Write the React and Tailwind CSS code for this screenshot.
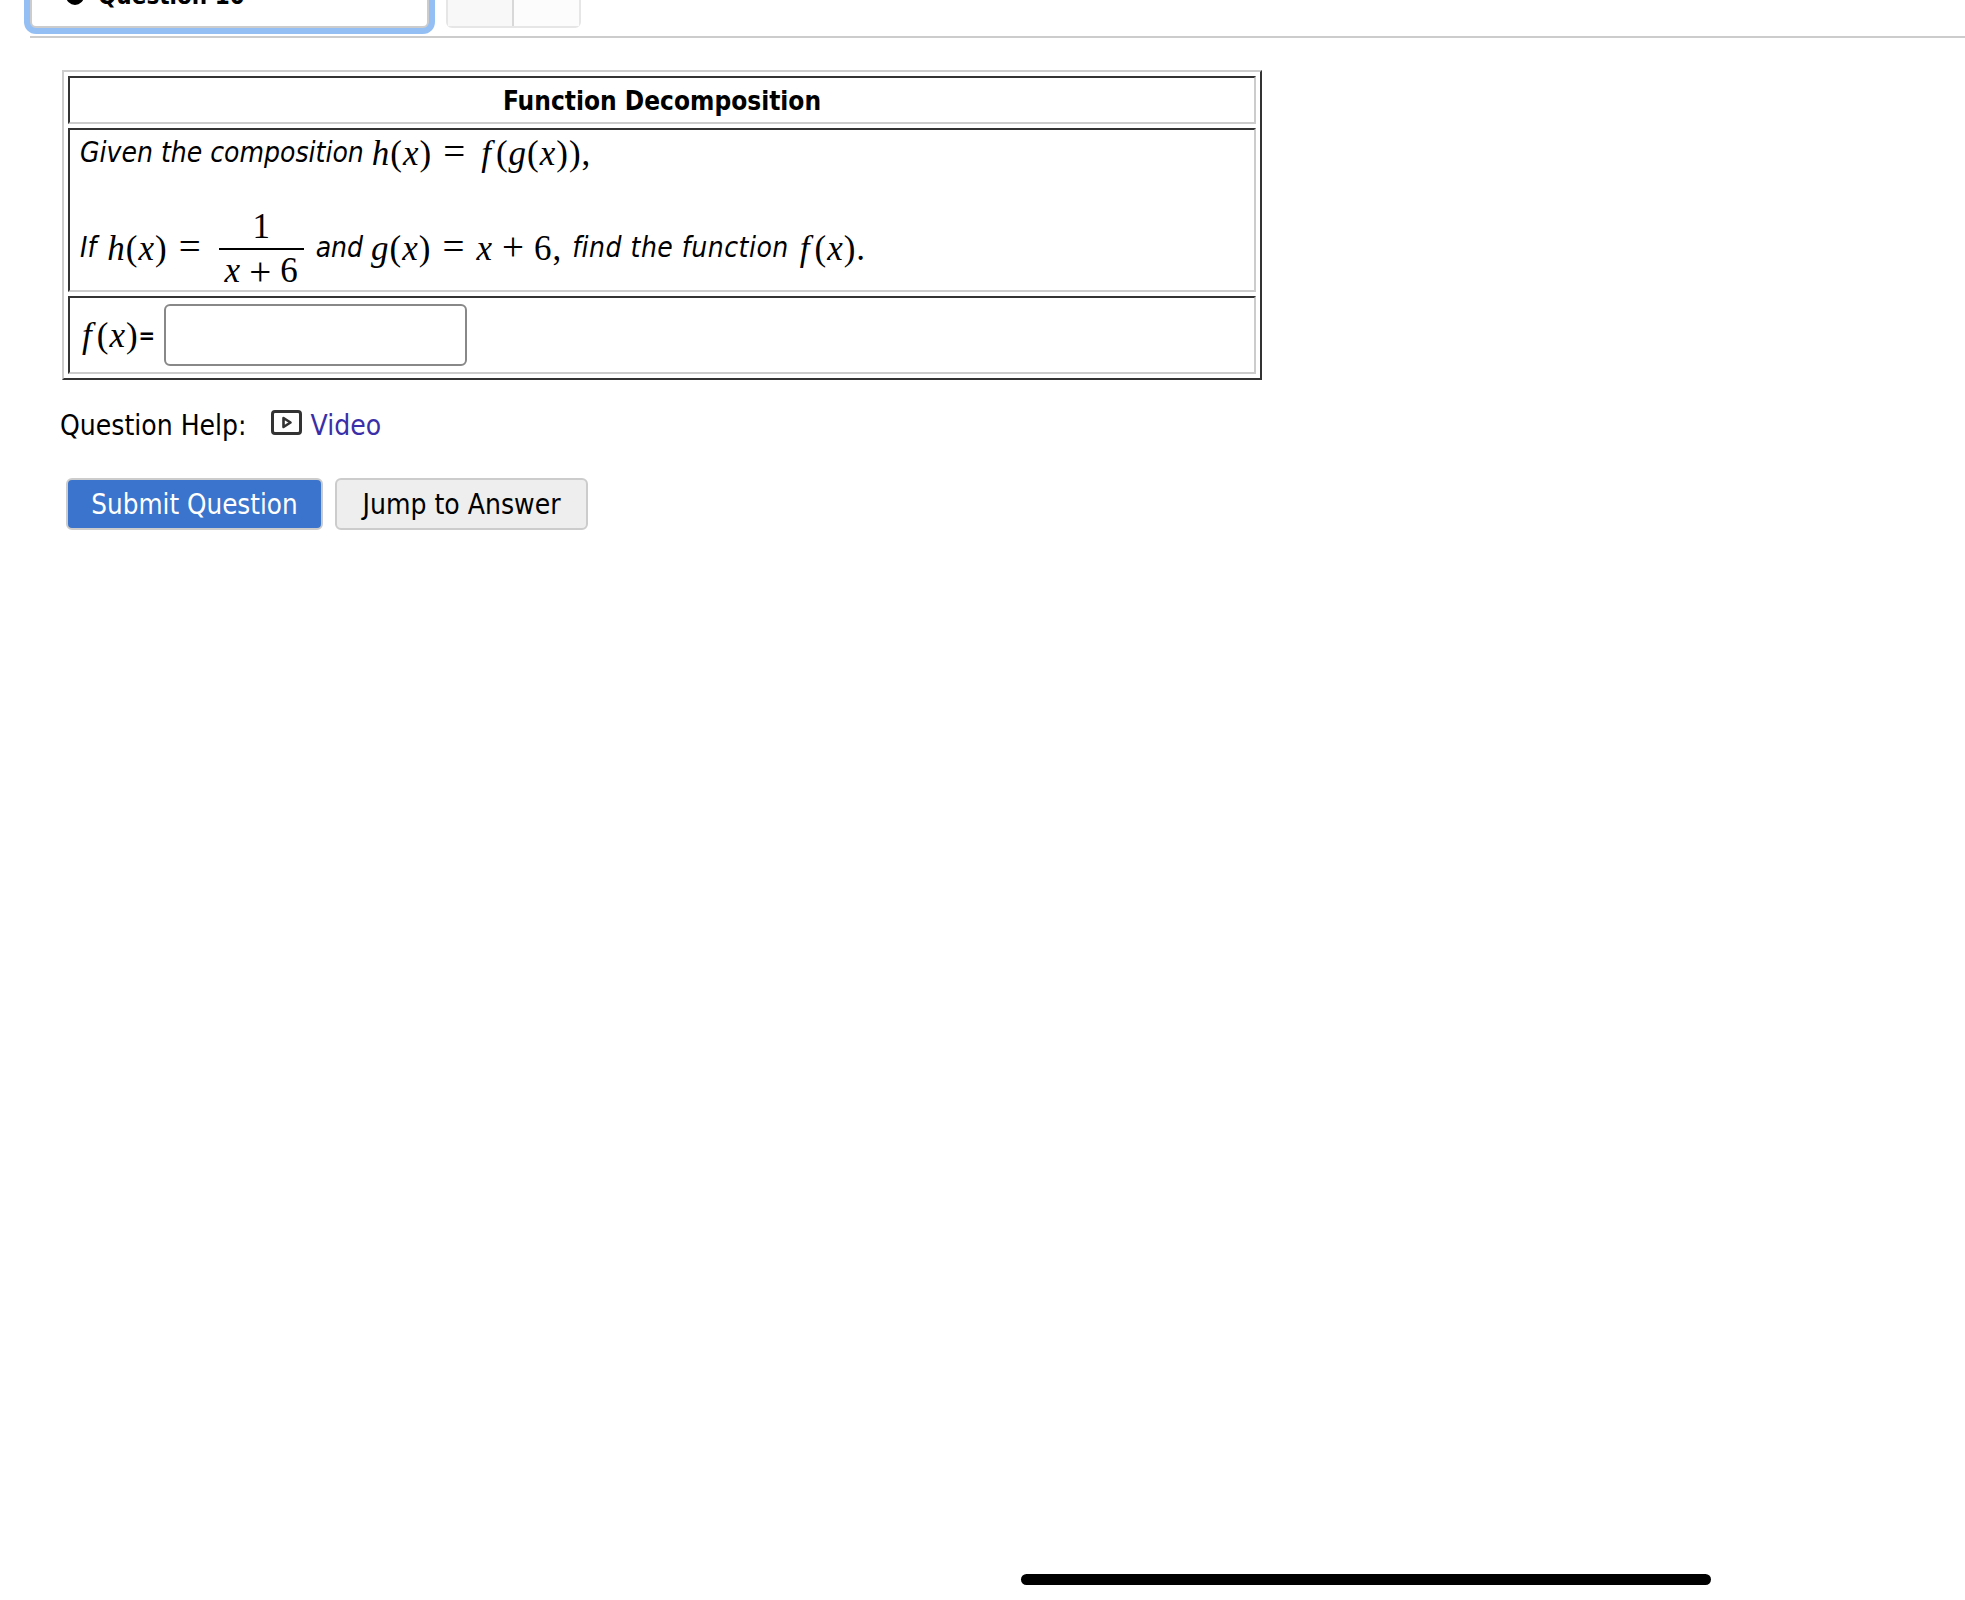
function Mi({ children, className = '' }) {
  return <span className={`font-['Liberation_Serif',serif] italic ${className}`}>{children}</span>
}

function Mn({ children }) {
  return <span className="font-['Liberation_Serif',serif] not-italic">{children}</span>
}

function Eq() {
  return <span className="font-['Liberation_Serif',serif] not-italic text-[39px] leading-none mx-[11px]">=</span>
}

function Plus() {
  return <span className="font-['Liberation_Serif',serif] not-italic text-[39px] leading-none mx-[9px]">+</span>
}

function Math({ children, className = '' }) {
  return <span className={`text-[35px] leading-[40px] not-italic tracking-[1px] ${className}`}>{children}</span>
}

export default function App() {
  return (
    <div className="relative h-[1600px] w-[1965px] overflow-hidden bg-white text-[28px] text-black font-['DejaVu_Sans_Condensed','DejaVu_Sans',sans-serif]">
      <div className="ml-[30px] flex h-[38px] items-end gap-[17px] border-b-2 border-[#cccccc] pb-[8px]">
        <div className="flex h-[64px] w-[399px] items-center gap-[14px] rounded-[6px] border-2 border-[#cccccc] bg-white pl-[34px] ring-[6px] ring-[#94bff5]">
          <span className="h-[18px] w-[18px] rounded-full border-[5px] border-black" />
          <span className="text-[24px] font-semibold">Question 10</span>
        </div>
        <div className="flex h-[40px] w-[135px] rounded-[6px] border-2 border-[#e6e6e6]">
          <div className="w-[66px] border-r-2 border-[#d8d8d8] bg-[#f8f8f8]" />
          <div className="flex-1 bg-[#fcfcfc]" />
        </div>
      </div>

      <div className="ml-[62px] mt-[32px] w-[1200px]">
        <table className="w-full border-separate border-spacing-1 border-2 border-[#cccccc] border-r-[#333333] border-b-[#333333]">
          <tbody>
            <tr>
              <th className="h-[48px] border-2 border-[#333333] border-r-[#cccccc] border-b-[#cccccc] pt-[2px] text-center text-[26px] font-bold">
                Function Decomposition
              </th>
            </tr>
            <tr>
              <td className="h-[164px] border-2 border-[#333333] border-r-[#cccccc] border-b-[#cccccc] pl-[10px] align-top italic">
                <div className="mt-[3px] flex h-[40px] items-center whitespace-pre">
                  Given the composition <Math><Mi>h</Mi><Mn>(</Mn><Mi>x</Mi><Mn>)</Mn><Eq /><Mi className="ml-[4px] pr-[4px]">f</Mi><Mn>(</Mn><Mi>g</Mi><Mn>(</Mn><Mi>x</Mi><Mn>)),</Mn></Math>
                </div>
                <div className="mt-[33px] flex h-[84px] items-center whitespace-pre">
                  If <Math><Mi className="ml-[3px]">h</Mi><Mn>(</Mn><Mi>x</Mi><Mn>)</Mn><Eq /></Math>
                  <span className="ml-[6px] mr-[12px] flex w-[85px] flex-col items-center text-[35px] not-italic leading-[36px]">
                    <span className="w-full border-b-2 border-black pb-[3px] pt-[2px] text-center"><Mn>1</Mn></span>
                    <span className="flex items-center pt-[2px] text-center"><Mi>x</Mi><Plus /><Mn>6</Mn></span>
                  </span>
                  and <Math><Mi>g</Mi><Mn>(</Mn><Mi>x</Mi><Mn>)</Mn><Eq /><Mi>x</Mi><Plus /><Mn>6,</Mn></Math>
                  <span className="ml-[10px] tracking-[0.5px]">find the function</span>
                  <Math className="ml-[11px]"><Mi className="pr-[4px]">f</Mi><Mn>(</Mn><Mi>x</Mi><Mn>).</Mn></Math>
                </div>
              </td>
            </tr>
            <tr>
              <td className="h-[78px] border-2 border-[#333333] border-r-[#cccccc] border-b-[#cccccc] pl-[12px]">
                <div className="flex items-center">
                  <Math><Mi className="pr-[4px]">f</Mi><Mn>(</Mn><Mi>x</Mi><Mn>)</Mn></Math>
                  <span className="text-[22px] font-bold">=</span>
                  <input className="ml-[9px] h-[62px] w-[303px] rounded-[6px] border-2 border-[#888888] bg-white" />
                </div>
              </td>
            </tr>
          </tbody>
        </table>
      </div>

      <div className="ml-[60px] mt-[26px] flex h-[40px] items-center">
        <span>Question Help:</span>
        <svg className="ml-[24px] -mt-[7px]" width="31" height="25" viewBox="0 0 31 25" fill="none">
          <rect x="1.5" y="1.5" width="28" height="22" rx="2.5" stroke="#333333" strokeWidth="3" />
          <path d="M12.5 8 L19.5 12.5 L12.5 17 Z" stroke="#333333" strokeWidth="2.6" strokeLinejoin="round" />
        </svg>
        <a className="ml-[9px] text-[#3a2fa8]">Video</a>
      </div>

      <div className="ml-[66px] mt-[32px] flex gap-[12px]">
        <button className="h-[52px] w-[257px] rounded-[6px] border-2 border-[#cccccc] bg-[#3b74cc] pt-[2px] text-[27.5px] text-white">Submit Question</button>
        <button className="h-[52px] w-[253px] rounded-[6px] border-2 border-[#cccccc] bg-[#eeeeee] pt-[2px] text-black">Jump to Answer</button>
      </div>

      <div className="absolute left-[1021px] top-[1574px] h-[11px] w-[690px] rounded-[6px] bg-black" />
    </div>
  )
}
